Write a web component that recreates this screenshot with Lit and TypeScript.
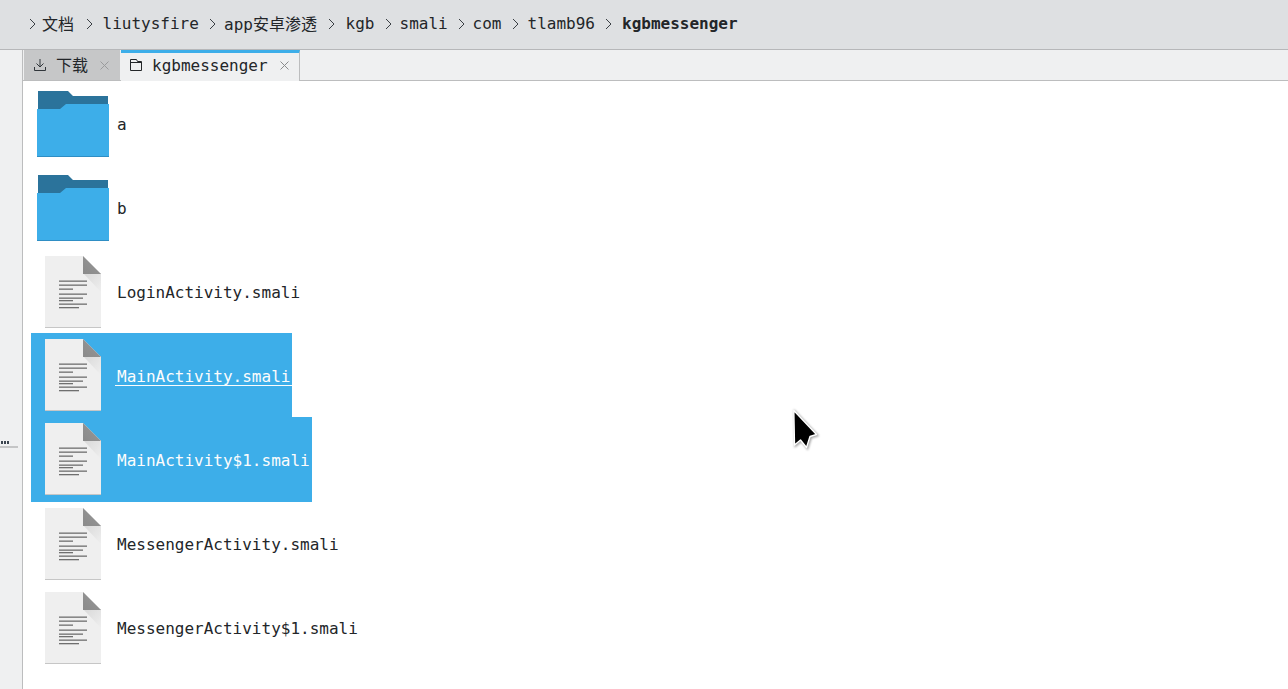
import { LitElement, html, css, svg } from "lit";
import { customElement } from "lit/decorators.js";

interface Crumb { text: string; lead: number; trail: number; cjk?: boolean; }

const crumbs: Crumb[] = [
  { text: "文档", lead: 6, trail: 12, cjk: true },
  { text: "liutysfire", lead: 9.5, trail: 10.2 },
  { text: "app安卓渗透", lead: 8, trail: 11.1, cjk: true },
  { text: "kgb", lead: 10.5, trail: 10.6 },
  { text: "smali", lead: 7.5, trail: 10.3 },
  { text: "com", lead: 7.5, trail: 10.6 },
  { text: "tlamb96", lead: 8.5, trail: 10.1 },
];

const folderIcon = html`<svg class="icon" width="72" height="72" viewBox="0 0 72 72">
  <path d="M1 4H31L36 9H71V30H1Z" fill="#2b739b" />
  <path d="M0 22H23L29 17H72V70H0Z" fill="#3daee9" />
  <rect x="0" y="69" width="72" height="1" fill="#2f8ec4" />
</svg>`;

const lines: [number, number][] = [
  [24.5, 28], [28.5, 28], [32.5, 14], [37.5, 28], [41.5, 24], [44, 14], [47.5, 28], [51, 20],
];

const fileIcon = html`<svg class="icon" width="72" height="72" viewBox="0 0 72 72">
  <defs>
    <linearGradient id="fold" x1="0" y1="0" x2="1" y2="1">
      <stop offset="0" stop-color="#d8d8d8" />
      <stop offset="1" stop-color="#efefef" />
    </linearGradient>
    <linearGradient id="flap" x1="1" y1="0" x2="0" y2="1">
      <stop offset="0" stop-color="#989898" />
      <stop offset="1" stop-color="#8a8a8a" />
    </linearGradient>
  </defs>
  <path d="M8 0H46L64 18V72H8Z" fill="#efefef" />
  <path d="M46 17H64V36Z" fill="url(#fold)" />
  <path d="M46 0L64 18H46Z" fill="url(#flap)" />
  <rect x="8" y="71" width="56" height="1" fill="#c6c6c6" />
  ${lines.map(([y, w]) => svg`<rect x="22" y=${y} width=${w} height="1.3" fill="#6f6f6f" />`)}
</svg>`;

interface Item {
  name: string;
  kind: "folder" | "file";
  selected?: boolean;
  current?: boolean;
  low?: boolean;
  tall?: boolean;
}

const items: Item[] = [
  { name: "a", kind: "folder" },
  { name: "b", kind: "folder" },
  { name: "LoginActivity.smali", kind: "file", low: true },
  { name: "MainActivity.smali", kind: "file", selected: true, current: true },
  { name: "MainActivity$1.smali", kind: "file", selected: true, tall: true },
  { name: "MessengerActivity.smali", kind: "file", low: true },
  { name: "MessengerActivity$1.smali", kind: "file", low: true },
];

@customElement("app-root")
export class AppRoot extends LitElement {
  static styles = css`
    :host {
      display: flex;
      flex-direction: column;
      position: relative;
      width: 1288px;
      height: 689px;
      overflow: hidden;
      background: #ffffff;
      color: #232629;
      font: 16px/20px "DejaVu Sans Mono", "Noto Sans CJK SC", monospace;
    }
    .crumbs {
      height: 49px;
      flex: none;
      box-sizing: border-box;
      display: flex;
      align-items: center;
      padding: 0 0 2px 29px;
      background: #dee0e2;
    }
    .crumb { display: flex; align-items: center; }
    .crumb svg { flex: none; }
    .crumb.cjk span { padding-top: 2px; }
    .crumb.last span { font-weight: 700; }
    .body { flex: 1; display: flex; min-height: 0; border-top: 1px solid #b6b7b9; }
    .side {
      flex: none;
      box-sizing: border-box;
      background: #eff0f1;
      border-right: 1px solid #bcbdbe;
      width: 23px;
      padding-top: 391px;
    }
    .dots { display: flex; gap: 1px; padding-left: 1px; }
    .dots i { width: 2px; height: 3px; background: #3b4550; }
    .rule { width: 18px; height: 2px; margin-top: 2px; background: #c4c5c6; }
    .main { flex: 1; min-width: 0; display: flex; flex-direction: column; }
    .tabs {
      height: 31px;
      flex: none;
      box-sizing: border-box;
      display: flex;
      padding-left: 1px;
      background: #eff0f1;
      border-bottom: 1px solid #bcbdbe;
    }
    .tab {
      height: 31px;
      box-sizing: border-box;
      display: flex;
      align-items: center;
      flex: none;
    }
    .tab.off {
      width: 96px;
      height: 30px;
      padding-left: 9px;
      background: #c6c7c8;
      margin-right: 1px;
    }
    .tab.on {
      width: 179px;
      padding: 0 0 0 9px;
      background: #eff0f1;
      border-top: 3px solid #3daee9;
      border-right: 1px solid #bcbdbe;
    }
    .tab.off .label { margin-left: 9px; padding-top: 2px; }
    .tab.on .label { margin-left: 10px; padding-bottom: 3px; }
    .tab.off .x { margin-left: 12px; }
    .tab.on .x { margin-left: 12px; margin-bottom: 3px; }
    .tab.on .folder { margin-bottom: 4px; }
    .list { display: flex; flex-direction: column; align-items: flex-start; padding-left: 8px; }
    .row {
      height: 84px;
      box-sizing: border-box;
      display: flex;
      align-items: center;
      padding: 0 2px 0 6px;
    }
    .row.tall { height: 85px; margin-bottom: -1px; padding-bottom: 1px; }
    .icon { flex: none; margin-right: 8px; }
    .row.low .icon { transform: translateY(1px); }
    .row .name { white-space: pre; padding-top: 4px; }
    .row.sel { background: #3daee9; color: #fcfcfc; }
    .row.cur .name {
      margin: 0 -2px;
      padding: 4px 2px 0;
      background: linear-gradient(#fcfcfc, #fcfcfc) 0 22px / 100% 1px no-repeat;
    }
    .cursor { position: absolute; left: 785px; top: 403px; }
  `;

  render() {
    return html`
      <div class="crumbs">
        ${crumbs.map(
          (c) => html`<div class="crumb ${c.cjk ? "cjk" : ""}">
            ${this.chev()}<span style="margin-left:${c.lead}px;margin-right:${c.trail}px">${c.text}</span>
          </div>`
        )}
        <div class="crumb last">${this.chev()}<span style="margin-left:10px">kgbmessenger</span></div>
      </div>
      <div class="body">
        <div class="side">
          <div class="dots"><i></i><i></i><i></i></div>
          <div class="rule"></div>
        </div>
        <div class="main">
          <div class="tabs">
            <div class="tab off">
              <svg width="14" height="14" viewBox="0 0 14 14" fill="none" stroke="#31363b" stroke-width="1">
                <path d="M7 1V9M3.5 5.5L7 9L10.5 5.5M1.5 9V12.5H12.5V9" />
              </svg>
              <span class="label">下载</span>
              ${this.closeX("#9a9b9c")}
            </div>
            <div class="tab on">
              <svg class="folder" width="12" height="12" viewBox="0 0 12 12" fill="none" stroke="#232629" stroke-width="1">
                <path d="M.5 11.5V.5H6.5L7.5 2.5H11.5V11.5Z" />
                <path d="M.5 3.5H11.5" />
              </svg>
              <span class="label">kgbmessenger</span>
              ${this.closeX("#8a8b8c")}
            </div>
          </div>
          <div class="list">
            ${items.map(
              (it) => html`<div class="row ${it.selected ? "sel" : ""} ${it.current ? "cur" : ""} ${it.low ? "low" : ""} ${it.tall ? "tall" : ""}">
                ${it.kind === "folder" ? folderIcon : fileIcon}
                <span class="name">${it.name}</span>
              </div>`
            )}
          </div>
        </div>
      </div>
      <svg class="cursor" width="40" height="52" viewBox="0 0 40 52">
        <defs>
          <filter id="cs" x="-30%" y="-30%" width="160%" height="160%">
            <feGaussianBlur stdDeviation="1.2" />
          </filter>
        </defs>
        <path d="M8.8 7.5L31.5 31.5L25 33.5L21.5 44.5L15.5 37L9.5 42Z" fill="#000" opacity=".35" stroke="#000" stroke-width="2" filter="url(#cs)" transform="translate(1 1)" />
        <path d="M8.8 7.5L31.5 31.5L25 33.5L21.5 44.5L15.5 37L9.5 42Z" fill="#000" stroke="#fff" stroke-width="1.4" stroke-linejoin="round" />
      </svg>
    `;
  }

  chev() {
    return html`<svg width="7" height="12" viewBox="0 0 7 12" fill="none" stroke="#3a3f44" stroke-width="1">
      <path d="M1 1L6 6L1 11" />
    </svg>`;
  }

  closeX(color: string) {
    return html`<svg class="x" width="9" height="9" viewBox="0 0 9 9" fill="none" stroke=${color} stroke-width="1">
      <path d="M0.5 0.5L8.5 8.5M8.5 0.5L0.5 8.5" />
    </svg>`;
  }
}
